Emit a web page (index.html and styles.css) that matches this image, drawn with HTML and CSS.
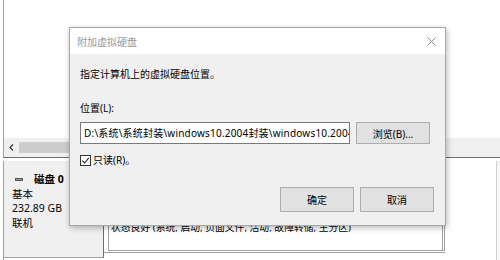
FILE: index.html
```html
<!DOCTYPE html>
<html lang="zh-CN">
<head>
  <meta charset="UTF-8">
  <title>附加虚拟硬盘</title>
  <link rel="stylesheet" href="styles.css">
</head>
<body>

  <!-- Disk management console behind the dialog -->
  <div class="console">
    <div class="volumes"></div>

    <div class="hscroll">
      <span class="arrow">
        <svg width="5" height="7" viewBox="0 0 5 7"><path d="M4 0.5 L1 3.5 L4 6.5" fill="none" stroke="#333" stroke-width="1.2"/></svg>
      </span>
      <span class="thumb"></span>
    </div>

    <div class="disk-row">
      <div class="disk-info">
        <div class="disk-name">
          <svg width="8" height="3" viewBox="0 0 8 3"><rect width="8" height="3" fill="#555"/><rect x="1" y="1" width="6" height="1" fill="#999"/></svg>
          <b>磁盘 0</b>
        </div>
        <div>基本</div>
        <div>232.89 GB</div>
        <div>联机</div>
      </div>
      <div class="partitions">
        <div class="partition">
          <div class="partition-status">状态良好 (系统, 启动, 页面文件, 活动, 故障转储, 主分区)</div>
        </div>
      </div>
      <div class="vscroll"></div>
    </div>
  </div>

  <!-- Attach VHD dialog -->
  <div class="dialog">
    <div class="titlebar">
      <span class="title">附加虚拟硬盘</span>
      <svg class="close" width="9" height="9" viewBox="0 0 9 9"><path d="M0.5 0.5 L8.5 8.5 M8.5 0.5 L0.5 8.5" stroke="#8a8a8a" stroke-width="1"/></svg>
    </div>
    <div class="dialog-body">
      <p class="intro">指定计算机上的虚拟硬盘位置。</p>
      <p class="label">位置(L):</p>
      <div class="path-row">
        <div class="path-input"><span>D:\系统\系统封装\windows10.2004封装\windows10.2004</span></div>
        <button class="btn">浏览(B)...</button>
      </div>
      <label class="readonly">
        <span class="checkbox">
          <svg width="9" height="9" viewBox="0 0 9 9"><path d="M1.2 4.6 L3.5 7 L7.8 1.8" fill="none" stroke="#222" stroke-width="1.1"/></svg>
        </span>
        只读(R)。
      </label>
      <div class="actions">
        <button class="btn">确定</button>
        <button class="btn">取消</button>
      </div>
    </div>
  </div>

</body>
</html>
```

FILE: styles.css
```css
body {
  margin: 0;
  width: 500px;
  height: 260px;
  overflow: hidden;
  position: relative;
  background: #fff;
  font-family: "Noto Sans", "Noto Sans CJK SC", sans-serif;
  font-size: 10px;
  color: #000;
}

/* Console behind */
.console {
  display: flex;
  flex-direction: column;
  height: 260px;
}

.volumes {
  height: 138px;
  margin-left: 3px;
  border-left: 1px solid #a0a0a0;
}

.hscroll {
  height: 19px;
  margin-left: 3px;
  border-left: 1px solid #a0a0a0;
  border-bottom: 1px solid #6e6e6e;
  background: #f0f0f0;
  display: flex;
  align-items: center;
}

.arrow {
  width: 15px;
  display: flex;
  justify-content: center;
}

.thumb {
  height: 11px;
  width: 120px;
  background: #cdcdcd;
}

.disk-row {
  flex: 1;
  display: flex;
  margin-top: 3px;
  margin-left: 3px;
  border-left: 1px solid #a0a0a0;
}

.disk-info {
  width: 91px;
  padding: 11px 0 0 8px;
  background: #f0f0f0;
  border-right: 1px solid #6e6e6e;
  border-bottom: 1px solid #a0a0a0;
  height: 85px;
  line-height: 14.5px;
  font-size: 10.5px;
}

.disk-name {
  display: flex;
  align-items: center;
  gap: 11px;
  padding-left: 3px;
}

.partitions {
  width: 337px;
  height: 91px;
  padding: 0 0 0 4px;
  border-bottom: 1px solid #a0a0a0;
}

.partition {
  height: 89px;
  border: 1px solid #a0a0a0;
  border-right: 3px double #a0a0a0;
  border-top: none;
  display: flex;
  flex-direction: column;
  justify-content: flex-end;
  padding-left: 2px;
}

.partition-status {
  padding-bottom: 16px;
  white-space: nowrap;
  font-size: 9.8px;
}

.vscroll {
  margin-left: auto;
  width: 3px;
  border-left: 1px solid #d0d0d0;
  background: #f7f7f7;
}

/* Dialog */
.dialog {
  position: absolute;
  left: 69px;
  top: 27px;
  width: 375px;
  height: 197px;
  border: 1px solid #a8a8a8;
  background: #f0f0f0;
  box-shadow: 1px 2px 6px rgba(0, 0, 0, 0.28);
  display: flex;
  flex-direction: column;
}

.titlebar {
  height: 26px;
  background: #fff;
  display: flex;
  align-items: center;
  padding: 0 9px 0 7px;
}

.title {
  color: #999;
  flex: 1;
}

.dialog-body {
  padding: 0 11px 0 10px;
}

.dialog-body p {
  margin: 0;
}

.intro {
  margin-top: 13px !important;
  line-height: 14px;
}

.label {
  margin-top: 20px !important;
  line-height: 14px;
}

.path-row {
  display: flex;
  gap: 6px;
  margin-top: 7px;
}

.path-input {
  width: 265px;
  height: 20px;
  border: 1px solid #7a7a7a;
  background: #fff;
  padding-left: 3px;
  line-height: 20px;
  white-space: nowrap;
  overflow: hidden;
  letter-spacing: 0.2px;
}

.btn {
  width: 74px;
  height: 22px;
  border: 1px solid #adadad;
  background: #e1e1e1;
  font-family: inherit;
  font-size: 10px;
  color: #000;
  padding: 0;
}

.readonly {
  display: flex;
  align-items: center;
  gap: 2px;
  margin-top: 10px;
  line-height: 13px;
}

.checkbox {
  width: 9px;
  height: 9px;
  border: 1px solid #333;
  background: #fff;
  display: flex;
}

.actions {
  display: flex;
  justify-content: flex-end;
  gap: 6px;
  margin-top: 20px;
}

.actions .btn {
  height: 25px;
}
```
